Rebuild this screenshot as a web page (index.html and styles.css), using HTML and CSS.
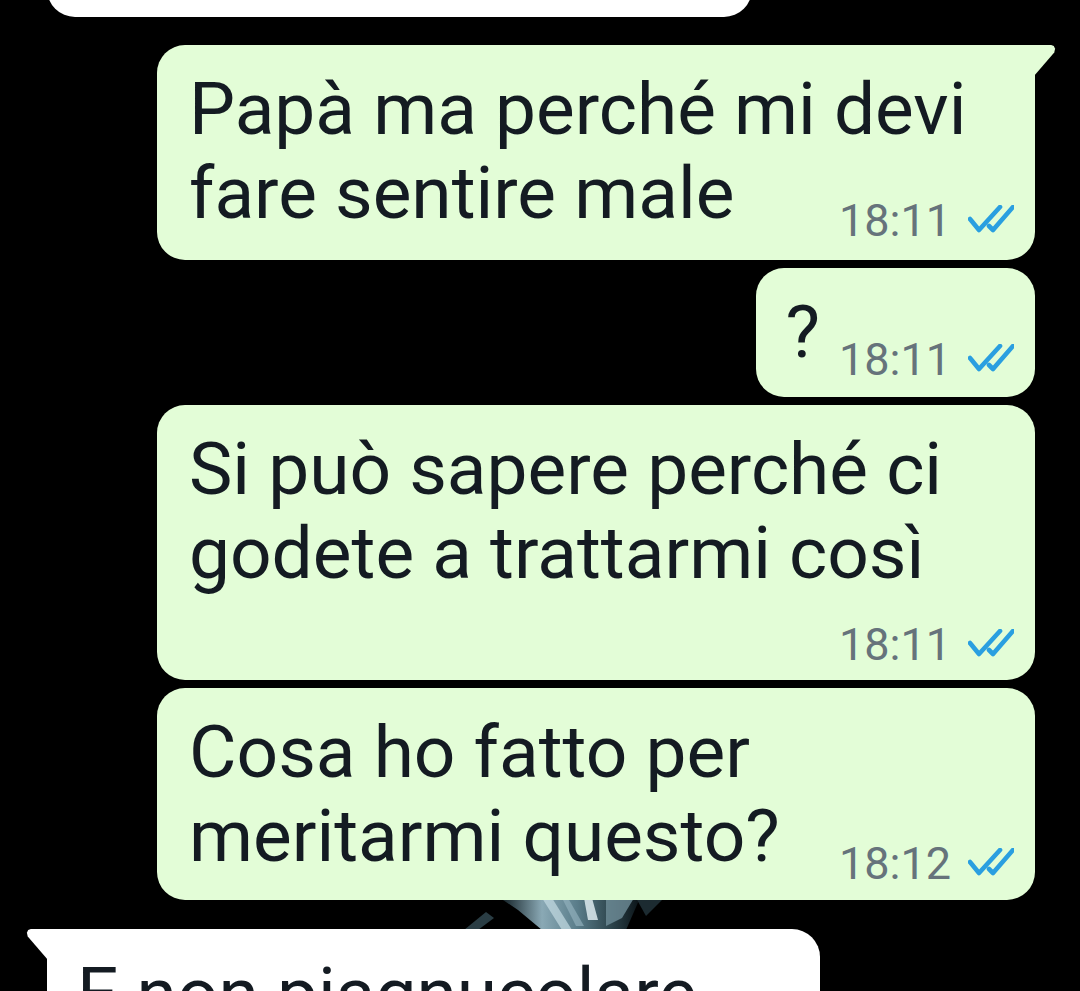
FILE: index.html
```html
<!DOCTYPE html>
<html lang="it">
<head>
<meta charset="utf-8">
<title>Chat</title>
<link rel="stylesheet" href="styles.css">
</head>
<body>
<div class="screen">
  <svg class="wallpaper" width="230" height="32" viewBox="0 0 230 32" aria-hidden="true">
    <defs>
      <linearGradient id="g1" x1="0" y1="0" x2="1" y2="0">
        <stop offset="0" stop-color="#0d1a1f"/>
        <stop offset="0.3" stop-color="#8aa9b5"/>
        <stop offset="0.55" stop-color="#5a7d8a"/>
        <stop offset="0.8" stop-color="#2c434b"/>
        <stop offset="1" stop-color="#0a1216"/>
      </linearGradient>
    </defs>
    <polygon points="14,32 36,14 44,20 28,32" fill="#2a3d44"/>
    <polygon points="50,0 190,0 176,32 92,32 68,12" fill="url(#g1)"/>
    <polygon points="92,0 102,0 122,32 112,32" fill="#c4dbe3" opacity="0.7"/>
    <polygon points="112,0 118,0 134,28 126,28" fill="#9ab8c3" opacity="0.6"/>
    <polygon points="134,0 142,0 148,22 138,22" fill="#e6f2f6" opacity="0.8"/>
    <polygon points="156,0 184,0 172,20 156,28" fill="#6f8d98" opacity="0.8"/>
    <polygon points="186,0 214,0 196,18" fill="#1c2b31"/>
  </svg>

  <div class="chat">
    <div class="bubble in top-cut"></div>

    <div class="bubble out wide tail first">
      <div class="row">
        <p class="msg">Papà ma perché mi devi<br>fare sentire male</p>
        <span class="meta"><span class="time">18:11</span><svg class="ticks" viewBox="0 0 46 28" width="46" height="28"><path d="M2 14 L11 25 L32 2"/><path d="M21 21 L25 25 L45 2"/></svg></span>
      </div>
    </div>

    <div class="bubble out short">
      <div class="row">
        <p class="msg">?</p>
        <span class="meta"><span class="time">18:11</span><svg class="ticks" viewBox="0 0 46 28" width="46" height="28"><path d="M2 14 L11 25 L32 2"/><path d="M21 21 L25 25 L45 2"/></svg></span>
      </div>
    </div>

    <div class="bubble out wide">
      <div class="row stack">
        <p class="msg">Si può sapere perché ci<br>godete a trattarmi così</p>
        <span class="meta"><span class="time">18:11</span><svg class="ticks" viewBox="0 0 46 28" width="46" height="28"><path d="M2 14 L11 25 L32 2"/><path d="M21 21 L25 25 L45 2"/></svg></span>
      </div>
    </div>

    <div class="bubble out wide">
      <div class="row">
        <p class="msg">Cosa ho fatto per<br>meritarmi questo?</p>
        <span class="meta"><span class="time">18:12</span><svg class="ticks" viewBox="0 0 46 28" width="46" height="28"><path d="M2 14 L11 25 L32 2"/><path d="M21 21 L25 25 L45 2"/></svg></span>
      </div>
    </div>

    <div class="bubble in tail-left last">
      <p class="msg">E non piagnucolare</p>
    </div>
  </div>
</div>
</body>
</html>
```

FILE: styles.css
```css
* { box-sizing: border-box; }

html, body {
  margin: 0;
  padding: 0;
  background: #000;
}

body {
  width: 1080px;
  height: 991px;
  overflow: hidden;
  font-family: Roboto, "Noto Sans", "Liberation Sans", sans-serif;
}

.screen {
  position: relative;
  width: 1080px;
  height: 991px;
  overflow: hidden;
  background: #000;
}

.wallpaper {
  position: absolute;
  left: 450px;
  top: 898px;
  z-index: 0;
}

.chat {
  position: relative;
  z-index: 1;
  display: flex;
  flex-direction: column;
  align-items: flex-end;
  gap: 8px;
  padding-right: 45px;
}

.bubble {
  position: relative;
  border-radius: 28px;
  padding: 22px 21px 22px 29px;
}

.bubble.out {
  background: #e3fdd7;
}

.bubble.in {
  align-self: flex-start;
  margin-left: 47px;
  background: #fff;
}

.bubble.wide {
  width: 878px;
  padding-left: 32px;
}

.bubble.short {
  padding-bottom: 23px;
}

.top-cut {
  width: 705px;
  height: 100px;
  margin-top: -83px;
}

.first {
  margin-top: 20px;
  padding-bottom: 25px;
}

.tail {
  border-top-right-radius: 0;
}

.tail::after {
  content: "";
  position: absolute;
  top: 0;
  right: -21px;
  width: 22px;
  height: 31px;
  background: #e3fdd7;
  clip-path: polygon(0 0, 78% 0, 90% 3%, 96% 12%, 92% 24%, 0 100%);
}

.tail-left {
  border-top-left-radius: 0;
}

.tail-left::before {
  content: "";
  position: absolute;
  top: 0;
  left: -21px;
  width: 22px;
  height: 31px;
  background: #fff;
  clip-path: polygon(100% 0, 22% 0, 10% 3%, 4% 12%, 8% 24%, 100% 100%);
}

.last {
  width: 773px;
  margin-top: 21px;
  padding-left: 30px;
  padding-top: 23px;
}

.row {
  display: flex;
  align-items: flex-end;
  justify-content: space-between;
}

.row.stack {
  flex-direction: column;
  align-items: stretch;
}

.msg {
  margin: 0;
  font-size: 73px;
  line-height: 84px;
  color: #141b22;
  white-space: nowrap;
  min-width: 0;
}

.meta {
  display: flex;
  align-items: center;
  gap: 17px;
  margin-left: 19px;
  margin-bottom: -10px;
  height: 48px;
  flex: none;
}

.row.stack .meta {
  align-self: flex-end;
  margin-top: 26px;
  margin-bottom: -11px;
}

.time {
  font-size: 45px;
  line-height: 48px;
  color: #66737b;
}

.ticks {
  display: block;
  margin-top: -4px;
}

.ticks path {
  fill: none;
  stroke: #2a9fe0;
  stroke-width: 4.6;
  stroke-linecap: round;
  stroke-linejoin: round;
}
```
